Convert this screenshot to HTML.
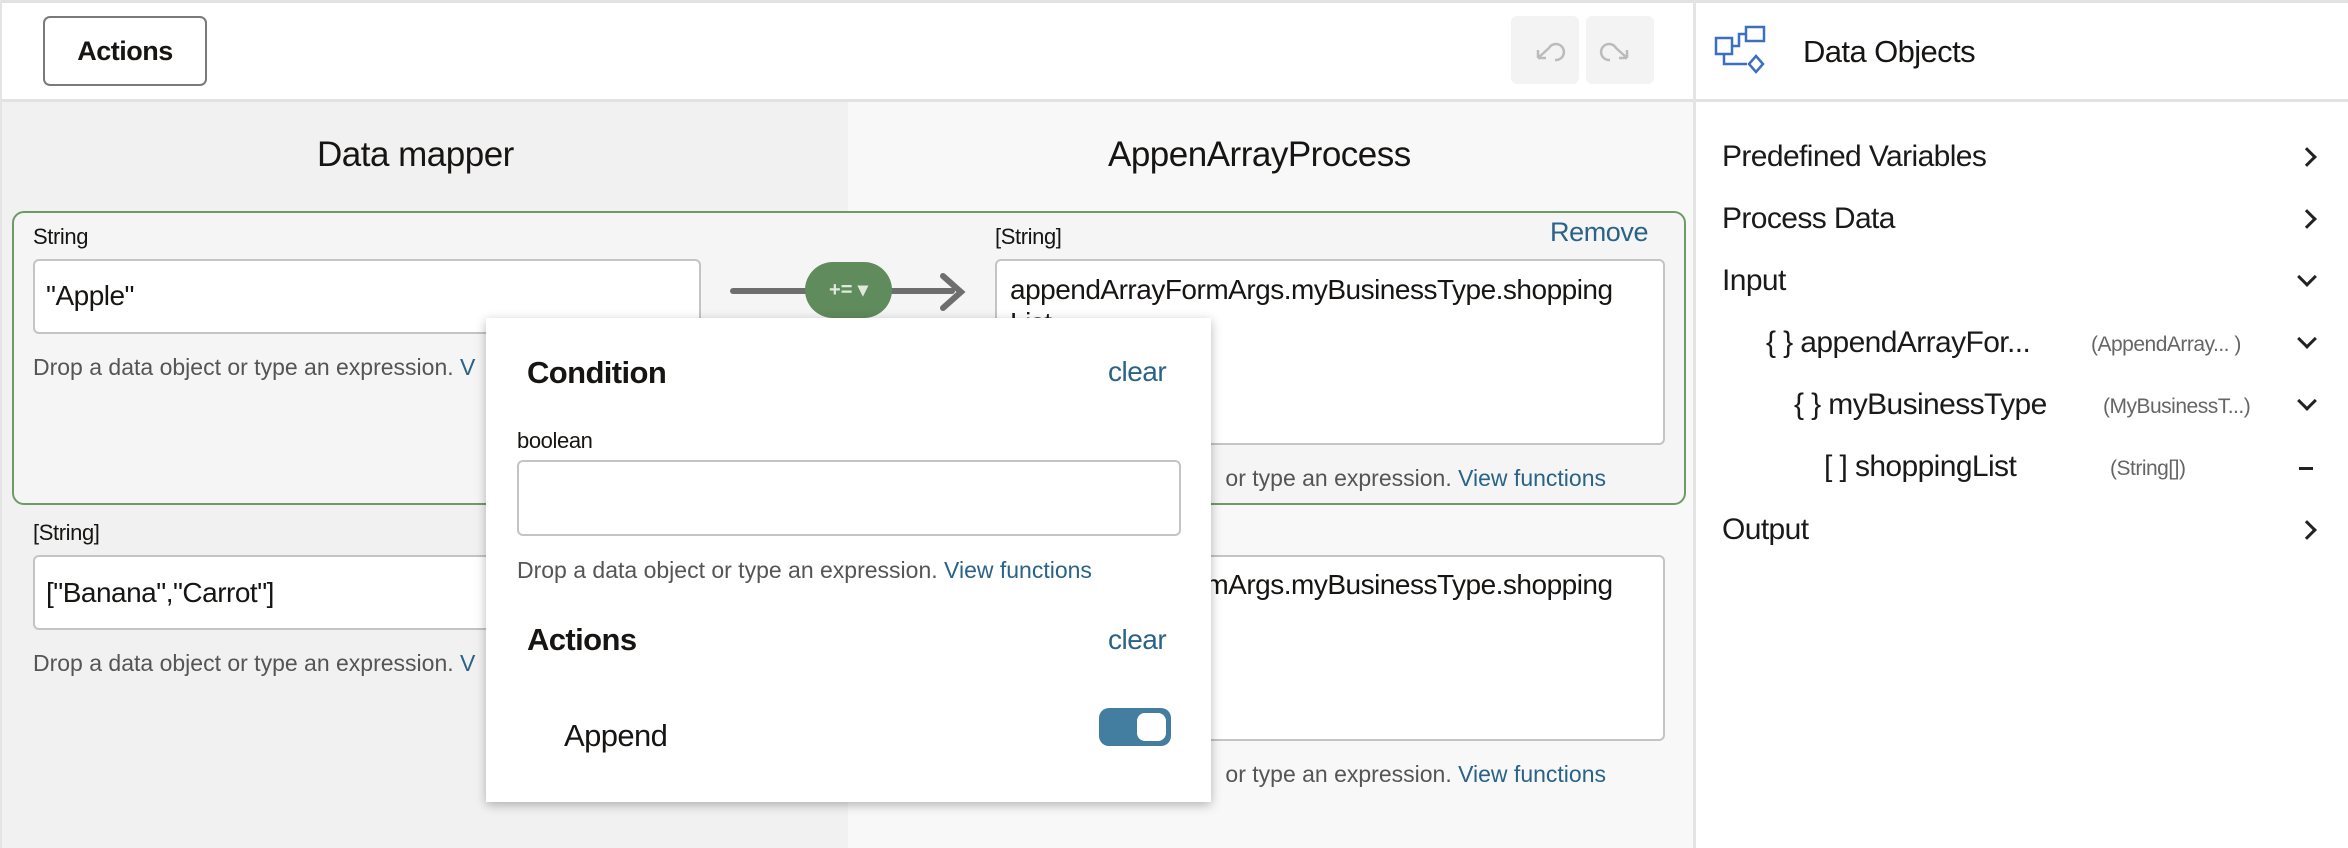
<!DOCTYPE html>
<html><head><meta charset="utf-8"><style>
*{box-sizing:border-box;margin:0;padding:0}
body{width:2348px;height:848px;position:relative;overflow:hidden;background:#fff;font-family:"Liberation Sans",sans-serif;color:#161513}
.a{position:absolute;white-space:nowrap}
.lnk{color:#2a6386}
.help{font-size:23px;color:#555;letter-spacing:0px}
.box{position:absolute;background:#fff;border:2px solid #c4c4c4;border-radius:6px}
.big{font-size:28px;letter-spacing:-0.5px}
.ri{font-size:30px;letter-spacing:-0.6px;color:#1a1a1a}
.chev{position:absolute;left:2300px;width:14px;height:14px;border-right:3px solid #222;border-bottom:3px solid #222}
.gr{font-size:21px;color:#666;letter-spacing:-0.5px}
</style></head><body>
<div class="a" style="left:0;top:0;width:2348px;height:3px;background:#e2e2e2"></div>
<div class="a" style="left:0;top:99px;width:1694px;height:3px;background:#e2e2e2"></div>
<div class="a" style="left:1694px;top:99px;width:654px;height:3px;background:#e2e2e2"></div>
<div class="a" style="left:1693px;top:0;width:3px;height:848px;background:#e4e4e4"></div>
<div class="a" style="left:0;top:0;width:2px;height:848px;background:#e4e4e4"></div>
<div class="a" style="left:43px;top:16px;width:164px;height:70px;border:2px solid #7a7a7a;border-radius:7px;font-size:27px;font-weight:bold;text-align:center;line-height:66px;letter-spacing:-0.5px">Actions</div>
<div class="a" style="left:1511px;top:16px;width:68px;height:68px;background:#f3f3f3;border-radius:6px"></div>
<div class="a" style="left:1586px;top:16px;width:68px;height:68px;background:#f3f3f3;border-radius:6px"></div>
<svg class="a" style="left:1511px;top:16px" width="68" height="68"><path d="M27 42 L38 32 A8 8 0 1 1 44 44 M27 42 L27 34 M27 42 L35 42" fill="none" stroke="#bbb" stroke-width="2.5"/></svg>
<svg class="a" style="left:1586px;top:16px" width="68" height="68"><path d="M41 42 L30 32 A8 8 0 1 0 24 44 M41 42 L41 34 M41 42 L33 42" fill="none" stroke="#bbb" stroke-width="2.5"/></svg>
<svg class="a" style="left:1714px;top:24px" width="60" height="56"><g fill="none" stroke="#3a6fc4" stroke-width="2.5"><rect x="2" y="14" width="16" height="16"/><rect x="32" y="3" width="18" height="14"/><path d="M18 22 H25 V10 H32 M10 30 V40 H33"/><path d="M42 32 L49 40 L42 48 L35 40 Z"/></g></svg>
<div class="a" style="left:1803px;top:34px;font-size:31px;letter-spacing:-0.6px">Data Objects</div>
<div class="a" style="left:2px;top:102px;width:846px;height:746px;background:#f1f1f1"></div>
<div class="a" style="left:848px;top:102px;width:845px;height:746px;background:#f8f8f8"></div>
<div class="a" style="left:317px;top:135px;font-size:35px;letter-spacing:-0.5px">Data mapper</div>
<div class="a" style="left:1108px;top:135px;font-size:35px;letter-spacing:-0.5px">AppenArrayProcess</div>
<div class="a" style="left:12px;top:211px;width:1674px;height:294px;border:2px solid #6f9a67;border-radius:12px;background:#f5f5f5"></div>
<div class="a" style="left:33px;top:224px;font-size:22px;letter-spacing:-0.4px">String</div>
<div class="box" style="left:33px;top:259px;width:668px;height:75px"></div>
<div class="a big" style="left:46px;top:280px">"Apple"</div>
<div class="a help" style="left:33px;top:354px">Drop a data object or type an expression. <span class="lnk">V</span></div>
<div class="a" style="left:730px;top:288px;width:225px;height:6px;background:#6e6e6e;border-radius:3px"></div>
<svg class="a" style="left:935px;top:270px" width="40" height="44"><path d="M8 6 L26 22 L8 38" fill="none" stroke="#6e6e6e" stroke-width="6" stroke-linecap="round"/></svg>
<div class="a" style="left:805px;top:262px;width:87px;height:56px;background:#5f8b5d;border-radius:28px;color:#dfe9dc;font-weight:bold;font-size:20px;text-align:center;line-height:56px">+= ▾</div>
<div class="a" style="left:995px;top:224px;font-size:22px;letter-spacing:-0.4px">[String]</div>
<div class="a" style="left:1550px;top:217px;font-size:27px;letter-spacing:-0.4px"><span class="lnk">Remove</span></div>
<div class="box" style="left:995px;top:259px;width:670px;height:186px"></div>
<div class="a big" style="left:1010px;top:274px">appendArrayFormArgs.myBusinessType.shopping</div>
<div class="a big" style="left:1010px;top:307px">List</div>
<div class="a help" style="right:742px;top:465px">or type an expression. <span class="lnk">View functions</span></div>
<div class="a" style="left:33px;top:520px;font-size:22px;letter-spacing:-0.4px">[String]</div>
<div class="box" style="left:33px;top:555px;width:668px;height:75px"></div>
<div class="a big" style="left:46px;top:577px">["Banana","Carrot"]</div>
<div class="a help" style="left:33px;top:650px">Drop a data object or type an expression. <span class="lnk">V</span></div>
<div class="box" style="left:995px;top:555px;width:670px;height:186px"></div>
<div class="a big" style="left:1010px;top:569px">appendArrayFormArgs.myBusinessType.shopping</div>
<div class="a help" style="right:742px;top:761px">or type an expression. <span class="lnk">View functions</span></div>
<div class="a" style="left:486px;top:318px;width:725px;height:484px;background:#fff;box-shadow:0 3px 10px rgba(0,0,0,.28)">
 <div class="a" style="left:41px;top:37px;font-size:31px;font-weight:bold;letter-spacing:-0.6px">Condition</div>
 <div class="a lnk" style="left:622px;top:38px;font-size:28px;letter-spacing:-0.5px">clear</div>
 <div class="a" style="left:31px;top:110px;font-size:22px;letter-spacing:-0.4px">boolean</div>
 <div class="box" style="left:31px;top:142px;width:664px;height:76px"></div>
 <div class="a help" style="left:31px;top:239px">Drop a data object or type an expression. <span class="lnk">View functions</span></div>
 <div class="a" style="left:41px;top:304px;font-size:31px;font-weight:bold;letter-spacing:-0.6px">Actions</div>
 <div class="a lnk" style="left:622px;top:306px;font-size:28px;letter-spacing:-0.5px">clear</div>
 <div class="a" style="left:78px;top:400px;font-size:31px;letter-spacing:-0.6px">Append</div>
 <div class="a" style="left:613px;top:390px;width:72px;height:38px;background:#437d9f;border-radius:10px"><div class="a" style="left:38px;top:5px;width:29px;height:28px;background:#fff;border-radius:8px"></div></div>
</div>
<div class="a ri" style="left:1722px;top:140px">Predefined Variables</div>
<div class="a ri" style="left:1722px;top:202px">Process Data</div>
<div class="a ri" style="left:1722px;top:264px">Input</div>
<div class="a ri" style="left:1766px;top:326px">{ } appendArrayFor...</div>
<div class="a gr" style="left:2091px;top:333px">(AppendArray... )</div>
<div class="a ri" style="left:1794px;top:388px">{ } myBusinessType</div>
<div class="a gr" style="left:2103px;top:395px">(MyBusinessT...)</div>
<div class="a ri" style="left:1824px;top:450px">[ ] shoppingList</div>
<div class="a gr" style="left:2110px;top:457px">(String[])</div>
<div class="a ri" style="left:1722px;top:513px">Output</div>
<div class="chev" style="top:150px;transform:rotate(-45deg)"></div>
<div class="chev" style="top:212px;transform:rotate(-45deg)"></div>
<div class="chev" style="top:270px;transform:rotate(45deg)"></div>
<div class="chev" style="top:332px;transform:rotate(45deg)"></div>
<div class="chev" style="top:394px;transform:rotate(45deg)"></div>
<div class="a" style="left:2299px;top:467px;width:14px;height:3px;background:#222"></div>
<div class="chev" style="top:523px;transform:rotate(-45deg)"></div>
</body></html>
